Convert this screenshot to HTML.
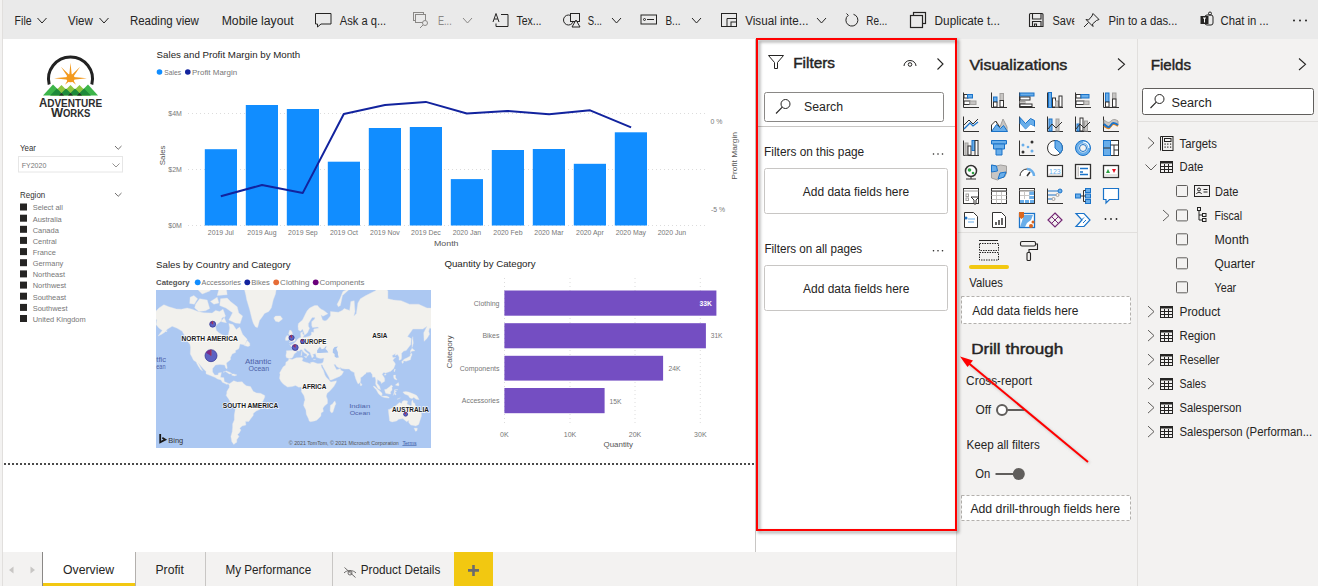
<!DOCTYPE html>
<html><head><meta charset="utf-8"><style>
html,body{margin:0;padding:0;width:1318px;height:586px;overflow:hidden;background:#f3f2f1}
svg{display:block}
text{font-family:"Liberation Sans",sans-serif}
</style></head><body>
<svg width="1318" height="586" viewBox="0 0 1318 586">
<rect x="0" y="0" width="1318" height="586" fill="#f3f2f1"/>
<rect x="0" y="0" width="1318" height="39" fill="#eaeaea"/>
<rect x="3" y="39" width="752" height="513" fill="#ffffff"/>
<rect x="0" y="0" width="2" height="586" fill="#f3f2f1"/>
<rect x="2" y="0" width="1" height="586" fill="#e1dfdd"/>
<rect x="3" y="39" width="0" height="0" fill="#fff"/>
<rect x="3" y="552" width="954" height="34" fill="#f3f2f1"/>
<rect x="43" y="552" width="92" height="34" fill="#ffffff"/>
<rect x="43" y="583" width="92" height="3" fill="#f2c811"/>
<rect x="42" y="552" width="1" height="34" fill="#8a8886"/>
<rect x="135" y="552" width="1" height="34" fill="#b3b0ad"/>
<rect x="205" y="552" width="1" height="34" fill="#c8c6c4"/>
<rect x="332" y="552" width="1" height="34" fill="#c8c6c4"/>
<rect x="454" y="552" width="39" height="34" fill="#f2c811"/>
<rect x="756" y="39" width="201" height="513" fill="#ffffff"/>
<rect x="755" y="39" width="1" height="513" fill="#c8c6c4"/>
<rect x="956" y="39" width="1" height="547" fill="#e1dfdd"/>
<rect x="1137" y="39" width="1" height="547" fill="#e1dfdd"/>
<text x="14.6" y="25.0" font-size="12.5" fill="#252423" font-weight="normal" textLength="17.0" lengthAdjust="spacingAndGlyphs">File</text>
<text x="68.0" y="25.0" font-size="12.5" fill="#252423" font-weight="normal" textLength="24.8" lengthAdjust="spacingAndGlyphs">View</text>
<text x="129.9" y="25.0" font-size="12.5" fill="#252423" font-weight="normal" textLength="69.0" lengthAdjust="spacingAndGlyphs">Reading view</text>
<text x="221.7" y="25.0" font-size="12.5" fill="#252423" font-weight="normal" textLength="72.0" lengthAdjust="spacingAndGlyphs">Mobile layout</text>
<text x="339.8" y="25.0" font-size="12.5" fill="#252423" font-weight="normal" textLength="46.4" lengthAdjust="spacingAndGlyphs">Ask a q...</text>
<text x="516.4" y="25.0" font-size="12.5" fill="#252423" font-weight="normal" textLength="25.1" lengthAdjust="spacingAndGlyphs">Tex...</text>
<text x="587.7" y="25.0" font-size="12.5" fill="#252423" font-weight="normal" textLength="14.3" lengthAdjust="spacingAndGlyphs">S...</text>
<text x="665.5" y="25.0" font-size="12.5" fill="#252423" font-weight="normal" textLength="14.9" lengthAdjust="spacingAndGlyphs">B...</text>
<text x="745.2" y="25.0" font-size="12.5" fill="#252423" font-weight="normal" textLength="63.3" lengthAdjust="spacingAndGlyphs">Visual inte...</text>
<text x="866.2" y="25.0" font-size="12.5" fill="#252423" font-weight="normal" textLength="21.1" lengthAdjust="spacingAndGlyphs">Re...</text>
<text x="934.6" y="25.0" font-size="12.5" fill="#252423" font-weight="normal" textLength="65.4" lengthAdjust="spacingAndGlyphs">Duplicate t...</text>
<text x="1052.5" y="25.0" font-size="12.5" fill="#252423" font-weight="normal" textLength="25.0" lengthAdjust="spacingAndGlyphs">Save</text>
<text x="1108.5" y="25.0" font-size="12.5" fill="#252423" font-weight="normal" textLength="69.0" lengthAdjust="spacingAndGlyphs">Pin to a das...</text>
<text x="1220.5" y="25.0" font-size="12.5" fill="#252423" font-weight="normal" textLength="48.2" lengthAdjust="spacingAndGlyphs">Chat in ...</text>
<text x="438.0" y="25.0" font-size="12.5" fill="#8a8886" font-weight="normal" textLength="13.7" lengthAdjust="spacingAndGlyphs">E...</text>
<rect x="1074.3" y="10" width="8" height="20" fill="#eaeaea"/>
<circle cx="1294" cy="20.5" r="1" fill="#252423"/>
<circle cx="1300" cy="20.5" r="1" fill="#252423"/>
<circle cx="1306" cy="20.5" r="1" fill="#252423"/>
<path d="M37.5 18.0L42.0 23.0L46.5 18.0" fill="none" stroke="#252423" stroke-width="1"/>
<path d="M99.5 18.0L104.0 23.0L108.5 18.0" fill="none" stroke="#252423" stroke-width="1"/>
<path d="M612.0 18.0L616.5 23.0L621.0 18.0" fill="none" stroke="#252423" stroke-width="1"/>
<path d="M692.0 18.0L696.5 23.0L701.0 18.0" fill="none" stroke="#252423" stroke-width="1"/>
<path d="M817.0 18.0L821.5 23.0L826.0 18.0" fill="none" stroke="#252423" stroke-width="1"/>
<path d="M463.0 18.0L467.5 23.0L472.0 18.0" fill="none" stroke="#8a8886" stroke-width="1"/>
<path d="M315.5 13.5h15.5v10.5h-10l-3.5 3v-3h-2z" fill="none" stroke="#252423" stroke-width="1"/>
<g fill="none" stroke="#8a8886" stroke-width="1"><rect x="413.5" y="12.5" width="10" height="8"/><rect x="415.5" y="14.5" width="10" height="8" fill="#eaeaea"/><circle cx="425" cy="23" r="2.5" fill="#eaeaea"/><path d="M423 25l-3 3"/></g>
<g fill="none" stroke="#252423" stroke-width="1"><path d="M493 22l3-8.5l3 8.5M494.2 19h3.6"/><path d="M501 14.5h7v12h-12v-3"/></g>
<g fill="none" stroke="#252423" stroke-width="1"><circle cx="568.5" cy="20" r="5"/><rect x="570.5" y="13.5" width="9" height="8" fill="#eaeaea"/><path d="M572 27l4-7l4 7z" fill="#eaeaea"/></g>
<g fill="none" stroke="#252423" stroke-width="1"><rect x="641" y="15" width="15.5" height="9"/><circle cx="644.5" cy="19.5" r="1"/><path d="M647 19.5h7"/></g>
<g fill="none" stroke="#252423" stroke-width="1"><rect x="721.5" y="13.5" width="15" height="13"/><path d="M727 26.5v-8h9.5"/><rect x="731" y="22" width="5.5" height="4.5"/></g>
<path d="M848 15.5a6 6 0 1 0 5.5-1.2" fill="none" stroke="#252423" stroke-width="1"/><path d="M846.5 13.5l2 2" stroke="#252423"/>
<g fill="none" stroke="#252423" stroke-width="1.2"><rect x="913.5" y="12.5" width="12" height="11"/><rect x="910.5" y="15.5" width="12" height="12" fill="#eaeaea"/></g>
<g fill="none" stroke="#252423" stroke-width="1.1"><path d="M1030.5 13.5h11.5a1 1 0 0 1 1 1v12h-13.5v-12a1 1 0 0 1 1-1z"/><path d="M1032.5 13.5v5.5h8.5v-5.5M1032.5 26.5v-5h8.5v5M1034.5 26.5v-2.5h2v2.5"/></g>
<g fill="none" stroke="#252423" stroke-width="1"><path d="M1093 13.5l6 6l-2.5 1l-4 3.5l0.5 2.5l-7-7l2.5 0.5l3.5-4z"/><path d="M1088.5 22.5l-4.5 4.5"/></g>
<g><rect x="1205" y="15" width="8" height="10" rx="2" fill="none" stroke="#252423"/><rect x="1200.5" y="16" width="8" height="8" fill="#252423"/><path d="M1203 18h3M1204.5 18v4.5" stroke="#fff" stroke-width="1"/><circle cx="1210" cy="13.5" r="1.5" fill="none" stroke="#252423"/></g>
<path d="M49.2 84.5A22 22 0 1 1 91.8 84.5" fill="none" stroke="#222222" stroke-width="3"/>
<path d="M72.1 78.3L70.5 62.8L68.9 78.3ZM71.7 77.3L60.9 66.8L69.3 79.3ZM71.7 79.3L80.1 66.8L69.3 77.3ZM70.5 76.7L54.0 78.3L70.5 79.9ZM70.5 79.9L87.0 78.3L70.5 76.7ZM69.3 77.3L65.0 84.8L71.7 79.3ZM69.3 79.3L76.0 84.8L71.7 77.3Z" fill="#f39a1e"/>
<circle cx="70.5" cy="78.3" r="4" fill="#f39a1e"/>
<path d="M43 95.5L53 84.5L64 95.5Z" fill="#3db54a"/><path d="M77 95.5L88 84.5L98 95.5Z" fill="#3db54a"/>
<path d="M51 95.5L61.5 85L72 95.5ZM60 95.5L70.5 85L81 95.5ZM69 95.5L79.5 85L90 95.5Z" fill="#8dc63f"/>
<path d="M50 95.5L57 88.5L64 95.5ZM59 95.5L66 88.5L73 95.5ZM68 95.5L75 88.5L82 95.5ZM77 95.5L84 88.5L91 95.5Z" fill="#1f8a3a"/>
<path d="M59 95.5L61.5 93L64 95.5ZM68 95.5L70.5 93L73 95.5ZM77 95.5L79.5 93L82 95.5Z" fill="#2a2a2a"/>
<text x="38.9" y="107.0" font-size="13" fill="#2d2d2d" font-weight="bold" textLength="8.3" lengthAdjust="spacingAndGlyphs">A</text>
<text x="47.2" y="107.0" font-size="10.8" fill="#2d2d2d" font-weight="bold" textLength="54.9" lengthAdjust="spacingAndGlyphs">DVENTURE</text>
<text x="50.9" y="117.4" font-size="13" fill="#2d2d2d" font-weight="bold" textLength="12.1" lengthAdjust="spacingAndGlyphs">W</text>
<text x="63.0" y="117.4" font-size="10.8" fill="#2d2d2d" font-weight="bold" textLength="27.4" lengthAdjust="spacingAndGlyphs">ORKS</text>
<text x="20.1" y="151.2" font-size="8.2" fill="#333333" font-weight="normal" textLength="15.9" lengthAdjust="spacingAndGlyphs">Year</text>
<path d="M115.0 146.0L118.2 149.3L121.5 146.0" fill="none" stroke="#605e5c" stroke-width="0.9"/>
<rect x="18.5" y="156.5" width="104" height="15.5" fill="#fff" stroke="#e6e6e6"/>
<text x="21.7" y="167.9" font-size="8" fill="#777777" font-weight="normal" textLength="24.7" lengthAdjust="spacingAndGlyphs">FY2020</text>
<path d="M112.5 163.5L116.0 167.0L119.5 163.5" fill="none" stroke="#8a8886" stroke-width="0.9"/>
<text x="20.1" y="198.4" font-size="8.2" fill="#333333" font-weight="normal" textLength="25.1" lengthAdjust="spacingAndGlyphs">Region</text>
<path d="M115.0 193.0L118.2 196.3L121.5 193.0" fill="none" stroke="#605e5c" stroke-width="0.9"/>
<rect x="20" y="203.5" width="7" height="7" fill="#252423"/>
<text x="32.7" y="210.3" font-size="7.8" fill="#777777" font-weight="normal" textLength="30.2" lengthAdjust="spacingAndGlyphs">Select all</text>
<rect x="20" y="214.7" width="7" height="7" fill="#252423"/>
<text x="32.7" y="221.5" font-size="7.8" fill="#777777" font-weight="normal" textLength="29.0" lengthAdjust="spacingAndGlyphs">Australia</text>
<rect x="20" y="225.8" width="7" height="7" fill="#252423"/>
<text x="32.7" y="232.6" font-size="7.8" fill="#777777" font-weight="normal" textLength="26.1" lengthAdjust="spacingAndGlyphs">Canada</text>
<rect x="20" y="236.9" width="7" height="7" fill="#252423"/>
<text x="32.7" y="243.8" font-size="7.8" fill="#777777" font-weight="normal" textLength="24.0" lengthAdjust="spacingAndGlyphs">Central</text>
<rect x="20" y="248.1" width="7" height="7" fill="#252423"/>
<text x="32.7" y="254.9" font-size="7.8" fill="#777777" font-weight="normal" textLength="23.2" lengthAdjust="spacingAndGlyphs">France</text>
<rect x="20" y="259.2" width="7" height="7" fill="#252423"/>
<text x="32.7" y="266.1" font-size="7.8" fill="#777777" font-weight="normal" textLength="30.6" lengthAdjust="spacingAndGlyphs">Germany</text>
<rect x="20" y="270.4" width="7" height="7" fill="#252423"/>
<text x="32.7" y="277.2" font-size="7.8" fill="#777777" font-weight="normal" textLength="32.3" lengthAdjust="spacingAndGlyphs">Northeast</text>
<rect x="20" y="281.6" width="7" height="7" fill="#252423"/>
<text x="32.7" y="288.4" font-size="7.8" fill="#777777" font-weight="normal" textLength="33.5" lengthAdjust="spacingAndGlyphs">Northwest</text>
<rect x="20" y="292.7" width="7" height="7" fill="#252423"/>
<text x="32.7" y="299.5" font-size="7.8" fill="#777777" font-weight="normal" textLength="33.5" lengthAdjust="spacingAndGlyphs">Southeast</text>
<rect x="20" y="303.9" width="7" height="7" fill="#252423"/>
<text x="32.7" y="310.7" font-size="7.8" fill="#777777" font-weight="normal" textLength="34.8" lengthAdjust="spacingAndGlyphs">Southwest</text>
<rect x="20" y="315.0" width="7" height="7" fill="#252423"/>
<text x="32.7" y="321.8" font-size="7.8" fill="#777777" font-weight="normal" textLength="53.0" lengthAdjust="spacingAndGlyphs">United Kingdom</text>
<text x="156.6" y="58.0" font-size="9.8" fill="#252423" font-weight="normal" textLength="143.6" lengthAdjust="spacingAndGlyphs">Sales and Profit Margin by Month</text>
<circle cx="159.5" cy="72" r="2.8" fill="#118dff"/><circle cx="187.8" cy="72" r="2.8" fill="#12239e"/>
<text x="164.3" y="75.0" font-size="7.8" fill="#777777" font-weight="normal" textLength="16.8" lengthAdjust="spacingAndGlyphs">Sales</text>
<text x="192.0" y="75.0" font-size="7.8" fill="#777777" font-weight="normal" textLength="45.1" lengthAdjust="spacingAndGlyphs">Profit Margin</text>
<line x1="188" y1="113.5" x2="705" y2="113.5" stroke="#dcdcdc" stroke-width="1" stroke-dasharray="1 3"/>
<line x1="188" y1="169.5" x2="705" y2="169.5" stroke="#dcdcdc" stroke-width="1" stroke-dasharray="1 3"/>
<line x1="188" y1="225.5" x2="705" y2="225.5" stroke="#dcdcdc" stroke-width="1" stroke-dasharray="1 3"/>
<text x="168.3" y="116.3" font-size="7.5" fill="#777777" font-weight="normal" textLength="13.6" lengthAdjust="spacingAndGlyphs">$4M</text>
<text x="168.3" y="172.4" font-size="7.5" fill="#777777" font-weight="normal" textLength="13.6" lengthAdjust="spacingAndGlyphs">$2M</text>
<text x="168.3" y="228.3" font-size="7.5" fill="#777777" font-weight="normal" textLength="13.6" lengthAdjust="spacingAndGlyphs">$0M</text>
<text x="0" y="0" font-size="8" fill="#555" transform="translate(164.5 165.2) rotate(-90)" textLength="19.7" lengthAdjust="spacingAndGlyphs">Sales</text>
<rect x="204.8" y="149.2" width="32.2" height="76.3" fill="#118dff"/>
<rect x="245.8" y="105" width="32.2" height="120.5" fill="#118dff"/>
<rect x="286.8" y="109" width="32.2" height="116.5" fill="#118dff"/>
<rect x="327.8" y="161.7" width="32.2" height="63.8" fill="#118dff"/>
<rect x="368.8" y="128" width="32.2" height="97.5" fill="#118dff"/>
<rect x="409.8" y="127" width="32.2" height="98.5" fill="#118dff"/>
<rect x="450.8" y="179.1" width="32.2" height="46.4" fill="#118dff"/>
<rect x="491.8" y="150" width="32.2" height="75.5" fill="#118dff"/>
<rect x="532.8" y="149" width="32.2" height="76.5" fill="#118dff"/>
<rect x="573.8" y="163.8" width="32.2" height="61.7" fill="#118dff"/>
<rect x="614.8" y="132.3" width="32.2" height="93.2" fill="#118dff"/>
<polyline points="220.8,196.3 262,185 302.8,192.9 343.8,114 385,105 425.8,101.9 466.8,113.5 507.2,110.9 549.1,114.3 590.1,110.3 631.1,127.3" fill="none" stroke="#12239e" stroke-width="2" stroke-linejoin="round"/>
<text x="207.8" y="235.2" font-size="7.2" fill="#777777" font-weight="normal" textLength="26.1" lengthAdjust="spacingAndGlyphs">2019 Jul</text>
<text x="247.3" y="235.2" font-size="7.2" fill="#777777" font-weight="normal" textLength="29.2" lengthAdjust="spacingAndGlyphs">2019 Aug</text>
<text x="288.1" y="235.2" font-size="7.2" fill="#777777" font-weight="normal" textLength="29.6" lengthAdjust="spacingAndGlyphs">2019 Sep</text>
<text x="329.9" y="235.2" font-size="7.2" fill="#777777" font-weight="normal" textLength="28.0" lengthAdjust="spacingAndGlyphs">2019 Oct</text>
<text x="370.1" y="235.2" font-size="7.2" fill="#777777" font-weight="normal" textLength="29.6" lengthAdjust="spacingAndGlyphs">2019 Nov</text>
<text x="411.1" y="235.2" font-size="7.2" fill="#777777" font-weight="normal" textLength="29.6" lengthAdjust="spacingAndGlyphs">2019 Dec</text>
<text x="452.7" y="235.2" font-size="7.2" fill="#777777" font-weight="normal" textLength="28.4" lengthAdjust="spacingAndGlyphs">2020 Jan</text>
<text x="493.3" y="235.2" font-size="7.2" fill="#777777" font-weight="normal" textLength="29.2" lengthAdjust="spacingAndGlyphs">2020 Feb</text>
<text x="534.3" y="235.2" font-size="7.2" fill="#777777" font-weight="normal" textLength="29.2" lengthAdjust="spacingAndGlyphs">2020 Mar</text>
<text x="576.1" y="235.2" font-size="7.2" fill="#777777" font-weight="normal" textLength="27.6" lengthAdjust="spacingAndGlyphs">2020 Apr</text>
<text x="615.7" y="235.2" font-size="7.2" fill="#777777" font-weight="normal" textLength="30.3" lengthAdjust="spacingAndGlyphs">2020 May</text>
<text x="657.7" y="235.2" font-size="7.2" fill="#777777" font-weight="normal" textLength="28.4" lengthAdjust="spacingAndGlyphs">2020 Jun</text>
<text x="434.0" y="245.5" font-size="8" fill="#555555" font-weight="normal" textLength="24.5" lengthAdjust="spacingAndGlyphs">Month</text>
<text x="710.5" y="123.5" font-size="7.2" fill="#777777" font-weight="normal" textLength="11.9" lengthAdjust="spacingAndGlyphs">0 %</text>
<text x="711.0" y="211.6" font-size="7.2" fill="#777777" font-weight="normal" textLength="14.0" lengthAdjust="spacingAndGlyphs">-5 %</text>
<text x="0" y="0" font-size="8" fill="#555" transform="translate(736.6 179.7) rotate(-90)" textLength="47.7" lengthAdjust="spacingAndGlyphs">Profit Margin</text>
<text x="156.1" y="268.0" font-size="9.8" fill="#252423" font-weight="normal" textLength="134.4" lengthAdjust="spacingAndGlyphs">Sales by Country and Category</text>
<text x="156.1" y="285.0" font-size="7.8" fill="#555555" font-weight="bold" textLength="33.5" lengthAdjust="spacingAndGlyphs">Category</text>
<circle cx="197.7" cy="282.3" r="2.9" fill="#118dff"/>
<text x="201.6" y="285.0" font-size="7.8" fill="#777777" font-weight="normal" textLength="39.3" lengthAdjust="spacingAndGlyphs">Accessories</text>
<circle cx="247.3" cy="282.3" r="2.9" fill="#12239e"/>
<text x="251.2" y="285.0" font-size="7.8" fill="#777777" font-weight="normal" textLength="18.6" lengthAdjust="spacingAndGlyphs">Bikes</text>
<circle cx="276.2" cy="282.3" r="2.9" fill="#e66c37"/>
<text x="280.1" y="285.0" font-size="7.8" fill="#777777" font-weight="normal" textLength="29.4" lengthAdjust="spacingAndGlyphs">Clothing</text>
<circle cx="315.7" cy="282.3" r="2.9" fill="#6b007b"/>
<text x="319.6" y="285.0" font-size="7.8" fill="#777777" font-weight="normal" textLength="44.9" lengthAdjust="spacingAndGlyphs">Components</text>
<svg x="156" y="290" width="275" height="158" viewBox="156 290 275 158" overflow="hidden"><rect x="156" y="290" width="275" height="158" fill="#acc8f2"/><path d="M153.9 317.9L155.6 311.5L158.9 308.0L163.9 304.7L168.9 306.8L176.4 309.0L181.4 309.2L187.2 308.0L192.2 309.2L198.0 311.5L203.9 312.7L212.2 313.1L215.5 310.4L219.7 311.5L223.0 309.2L225.5 315.9L221.4 320.9L218.0 323.6L215.5 326.3L216.4 330.4L218.9 332.8L223.0 335.3L225.5 335.7L227.2 340.6L228.0 336.5L229.7 328.0L228.8 323.6L233.0 324.5L236.3 329.6L239.7 327.1L242.6 334.3L247.2 339.3L244.7 345.1L240.1 343.9L238.8 348.7L235.5 350.5L235.5 352.5L232.2 353.9L230.5 357.6L230.5 359.7L226.4 363.1L227.2 367.4L226.9 369.1L225.7 367.9L224.7 365.1L219.7 364.4L215.5 365.1L212.6 368.4L212.6 372.0L214.7 375.1L218.0 374.9L218.5 372.9L221.4 372.5L220.5 377.3L223.9 377.7L224.3 381.6L227.6 382.9L229.4 383.7L230.5 382.9L233.8 380.7L237.2 382.0L242.2 381.8L243.8 383.7L246.3 385.8L250.5 386.6L252.2 389.6L253.4 391.6L256.7 392.9L260.5 393.3L264.7 395.4L264.8 397.1L263.0 400.9L261.3 403.4L260.9 406.5L259.7 409.6L256.7 410.7L253.4 413.2L253.2 415.6L250.5 419.0L248.8 421.4L245.5 421.4L245.9 425.1L242.2 426.1L239.7 428.3L240.9 430.0L239.3 432.9L237.6 434.6L239.0 436.5L236.8 439.7L236.8 442.3L235.5 443.0L233.8 444.4L231.8 441.7L230.9 436.5L232.2 431.7L232.6 427.2L232.6 424.0L234.3 419.9L234.3 415.1L235.1 410.5L235.3 406.5L233.8 405.2L230.5 402.6L228.8 399.2L226.2 395.4L226.8 393.3L226.8 391.6L228.0 389.6L229.3 387.5L229.3 385.4L228.0 383.4L227.2 384.5L222.4 382.3L220.9 379.9L217.6 379.0L214.7 377.3L206.0 373.8L206.0 371.4L203.0 368.4L200.1 365.1L198.3 362.9L199.7 365.5L201.0 367.9L202.6 370.9L200.5 369.5L198.5 366.5L196.8 363.6L196.2 362.0L193.5 360.2L191.8 356.8L190.3 354.0L190.5 347.6L190.0 344.6L188.0 341.9L185.1 336.5L182.2 331.2L177.2 328.3L172.2 326.3L167.2 329.3L165.1 332.0L161.8 334.3L158.1 336.0L162.2 330.4L158.9 328.0L156.0 324.5L156.8 319.9ZM243.8 283.3L244.3 289.0L245.9 295.6L246.7 299.8L249.7 309.7L250.9 314.8L252.1 319.5L253.4 323.6L255.5 327.1L257.6 327.6L259.5 320.5L262.2 316.9L264.5 313.5L268.8 311.5L271.4 307.8L273.3 299.8L275.5 294.1L276.3 289.0L277.1 283.3ZM273.8 317.9L275.5 316.1L280.5 315.9L282.6 318.9L278.8 322.0L275.5 321.2ZM289.1 358.6L286.3 357.6L285.9 355.5L286.5 352.2L286.3 350.8L290.5 350.5L292.6 350.6L292.8 347.6L290.1 345.4L292.6 344.2L295.0 342.6L296.3 341.0L297.5 339.3L299.2 337.9L300.9 337.2L300.7 335.0L300.6 332.8L302.5 331.7L302.5 334.0L304.2 335.0L303.0 337.2L305.5 337.2L309.2 336.2L311.3 335.0L311.5 332.0L313.8 332.3L313.8 329.0L318.8 328.0L317.5 327.1L312.5 327.6L311.7 325.4L311.7 321.8L314.6 318.9L315.0 317.5L312.1 317.5L308.4 323.6L308.4 326.3L309.5 328.3L307.5 332.8L305.9 334.3L304.6 335.1L303.4 331.2L302.5 329.1L300.5 331.2L298.4 329.9L298.0 326.3L298.4 323.6L302.5 319.9L305.5 313.8L307.1 310.8L309.6 308.0L314.6 305.5L317.5 305.5L319.6 308.0L321.3 309.2L323.8 310.4L327.9 313.8L322.9 316.3L320.9 314.8L322.5 319.9L325.0 320.9L327.1 319.9L330.4 315.9L330.4 311.5L338.3 312.2L342.1 310.6L344.2 308.5L349.6 310.4L350.8 301.5L354.2 300.7L355.0 311.5L353.8 315.9L356.3 313.8L357.9 302.9L360.4 298.7L365.8 295.6L375.4 290.7L380.4 284.5L387.9 290.7L387.9 298.7L393.7 300.1L401.2 300.7L409.5 304.2L418.7 304.2L427.0 308.0L435.4 308.2L443.7 310.8L443.7 318.9L442.0 319.9L438.7 324.9L435.4 328.0L429.5 328.3L428.7 331.2L429.5 334.3L427.0 338.6L424.1 341.3L423.7 332.8L427.0 326.3L422.9 329.1L412.9 329.1L407.5 336.5L411.2 338.6L410.8 344.5L406.2 350.5L403.7 351.1L401.6 353.3L401.6 357.6L401.2 359.4L399.0 360.2L399.1 357.1L397.6 354.6L395.0 355.5L395.4 353.5L393.3 354.9L392.1 355.5L392.9 357.4L395.8 357.4L394.1 358.6L392.9 360.2L394.6 362.6L395.4 364.1L393.7 368.4L390.8 371.3L385.8 372.9L383.7 372.5L382.1 374.2L384.6 378.2L384.7 381.2L381.2 383.5L381.1 382.1L377.5 379.5L377.1 383.3L379.6 386.2L380.6 389.7L377.9 388.5L375.6 384.1L375.8 379.9L375.0 376.9L372.5 377.3L372.1 374.2L370.4 372.0L368.7 372.2L366.2 372.5L365.8 373.8L364.6 374.5L362.5 376.4L360.6 377.7L360.7 379.9L360.2 382.2L358.3 384.1L357.5 382.9L355.8 379.0L354.6 375.1L354.3 372.5L352.1 371.6L350.8 370.7L349.2 369.0L345.0 369.1L341.7 368.6L340.8 367.4L339.2 367.9L336.7 366.6L335.4 364.4L333.8 364.6L335.6 367.9L336.7 369.7L340.4 368.4L340.8 370.2L343.6 371.6L341.9 374.7L339.6 376.4L337.1 377.5L331.3 380.1L329.9 380.1L329.2 377.7L326.3 372.5L322.9 366.5L322.5 365.1L320.9 364.7L321.7 367.4L323.4 370.2L324.9 374.9L326.3 377.3L329.2 380.3L329.9 381.2L330.9 382.1L336.4 380.8L336.1 382.6L333.8 386.6L329.6 391.2L327.1 393.3L326.3 396.2L327.5 399.6L327.5 403.4L324.4 406.0L322.9 408.2L323.4 411.4L321.1 413.0L320.9 416.1L318.8 418.3L316.7 420.2L314.6 420.9L310.5 421.7L309.1 420.9L308.6 419.0L306.3 414.2L305.9 410.0L303.6 405.6L304.2 401.7L305.0 400.0L304.0 395.8L301.3 391.6L301.7 387.9L300.9 387.0L298.8 387.2L295.5 385.5L292.1 386.6L287.6 387.1L284.6 385.1L282.7 383.4L280.9 381.2L279.5 378.4L280.1 374.2L279.6 372.9L283.0 367.0L285.6 365.1L285.9 362.2L288.1 360.7L289.0 358.8L292.1 359.6L296.3 357.8L302.1 357.4L303.0 358.8L302.1 360.5L303.1 361.5L306.7 362.4L310.5 363.7L310.5 362.6L313.0 362.1L317.9 363.7L320.4 363.4L322.5 363.1L323.4 361.2L323.8 358.8L323.8 357.9L320.9 358.5L318.4 358.1L316.4 357.3L315.9 354.9L315.6 354.3L315.5 353.5L313.4 354.2L312.6 354.0L313.8 356.3L312.1 358.1L311.7 357.1L310.9 354.9L310.0 352.4L307.1 350.5L305.1 348.6L304.0 348.4L304.2 349.9L305.5 351.6L307.1 352.8L309.2 354.2L307.5 356.0L306.9 356.5L307.0 354.4L304.6 353.0L303.0 351.6L302.1 349.9L300.9 349.6L299.2 351.0L296.5 350.8L296.5 352.3L294.2 353.9L293.4 356.0L292.1 357.9ZM388.3 409.6L388.7 413.2L389.6 420.9L392.1 421.9L396.6 420.9L398.7 419.2L402.9 418.5L406.6 421.7L408.7 420.4L408.7 422.5L410.8 425.1L413.7 425.4L415.8 426.1L418.7 424.5L420.0 420.4L421.6 415.6L421.2 412.3L419.4 410.0L417.9 408.2L415.4 406.0L414.8 403.4L413.3 402.6L412.5 399.8L411.6 401.7L411.6 405.2L410.4 405.8L407.0 403.9L407.6 401.1L404.1 400.4L402.5 401.3L401.6 403.4L399.1 402.6L397.9 403.9L395.4 406.0L392.9 407.8L389.1 409.4ZM414.1 428.1L417.3 428.2L417.0 430.8L415.4 431.2ZM373.2 386.1L375.0 386.5L377.5 389.0L380.4 391.6L382.1 393.3L382.1 395.6L380.8 395.7L378.7 394.1L377.5 392.0L376.1 389.4L374.2 387.7ZM381.4 396.5L384.1 396.1L386.2 396.1L387.6 396.6L389.1 397.3L389.1 398.1L386.2 397.7L383.7 397.3L381.6 396.6ZM384.6 389.6L385.0 391.6L385.6 393.3L389.1 394.1L390.8 394.0L390.4 392.0L392.1 390.0L391.9 387.3L392.9 386.4L391.2 385.0L390.0 386.5L387.9 388.1L386.2 389.3ZM393.3 395.4L394.1 392.9L394.6 389.8L397.9 389.6L394.1 390.4L396.6 391.6L395.0 392.3L396.2 394.6L395.0 394.9L394.1 393.1ZM402.9 392.0L405.8 391.6L408.7 392.1L411.2 393.0L415.0 394.6L417.0 395.8L419.1 399.6L416.2 399.2L413.7 397.3L412.9 398.3L411.2 398.4L409.5 397.6L408.3 395.4L404.5 394.1L403.7 393.1ZM393.7 375.1L395.6 375.1L395.4 377.3L397.1 379.9L394.6 379.2L394.1 378.6L393.6 377.0ZM395.4 385.0L398.3 382.6L399.1 385.0L398.3 386.0L397.1 385.5ZM393.9 371.1L394.6 369.0L395.4 369.3L394.4 372.0ZM384.2 374.5L385.8 373.7L386.2 374.2L385.0 375.4ZM402.8 360.7L406.2 361.2L410.4 359.7L411.2 356.5L412.0 354.9L411.5 352.9L410.4 353.9L410.2 356.0L407.7 357.4L404.5 359.1L402.8 360.4ZM401.7 361.5L402.9 360.8L403.7 361.9L402.6 363.6L401.9 362.2ZM410.4 352.8L411.6 351.3L415.0 350.7L412.0 348.2L410.4 350.8ZM412.0 347.6L413.3 343.2L412.7 336.7L412.0 340.6ZM360.2 385.6L360.4 382.6L361.9 384.5L361.7 385.5ZM334.9 400.9L335.9 403.9L335.0 405.6L332.9 412.3L331.3 412.8L330.1 410.9L330.4 405.2L332.5 404.1L333.8 402.1ZM289.1 342.5L295.0 341.0L295.2 339.0L293.8 337.9L292.6 335.0L292.1 332.0L290.9 330.3L289.6 330.3L288.6 333.5L289.6 335.7L291.3 336.5L290.1 338.1L290.1 339.7L289.5 340.3L291.3 340.7ZM288.8 339.7L288.8 337.2L288.0 335.4L286.7 335.7L285.5 337.9L285.5 340.3L287.1 340.5ZM242.6 315.9L240.1 323.6L235.5 323.1L228.8 319.9L232.6 312.7L225.9 308.0L219.7 305.5L220.5 298.7L227.2 298.1L230.5 301.5L237.2 306.8L238.8 313.1ZM195.5 304.2L199.7 298.7L207.2 300.1L209.7 308.5L205.5 310.8L198.9 311.5L194.7 308.0ZM189.7 303.4L194.3 304.2L197.6 298.7L193.9 295.6L190.1 297.2ZM210.5 301.5L217.2 297.2L218.9 302.9L213.9 304.2ZM217.2 295.6L227.2 294.7L226.4 289.0L218.9 289.0ZM202.2 294.1L210.5 290.7L206.4 287.2L197.2 289.0ZM221.4 321.8L226.4 322.7L223.9 316.9L221.8 317.9ZM244.3 345.6L247.2 340.5L249.7 343.2L249.9 345.7L248.0 346.6ZM223.0 372.2L226.4 370.9L229.7 372.2L232.0 373.6L229.3 374.0L225.5 371.6ZM231.8 374.0L233.8 373.9L236.9 375.0L234.7 375.9L231.8 375.3ZM337.1 304.2L340.0 298.7L342.9 291.4L351.3 287.5L342.5 295.6L340.4 305.5L338.3 306.8ZM301.3 353.3L302.0 351.1L301.7 355.5L300.8 355.5ZM304.2 356.4L306.8 356.2L306.3 357.9ZM313.4 359.3L315.7 359.4L313.8 359.7ZM166.4 332.0L167.2 330.7L165.6 331.2ZM289.6 344.5L290.1 345.1ZM400.4 397.9L399.6 398.3L397.1 399.2Z" fill="#f2f1ed" stroke="#e2e6ea" stroke-width="0.4"/>
<path d="M317.1 352.8L317.1 350.5L318.5 348.5L320.0 346.8L321.7 349.3L324.2 348.4L325.4 346.4L326.7 346.4L325.4 348.7L327.1 350.5L328.4 352.6L323.8 352.8L319.9 353.1L317.5 353.0ZM332.9 349.9L332.7 352.8L334.6 353.9L334.6 356.5L336.3 357.8L338.8 357.6L337.9 354.4L337.9 352.2L336.3 348.7L337.9 346.4L334.6 347.0L332.9 349.3Z" fill="#a9c5ef"/></svg>
<text x="181.5" y="340.5" font-size="7.5" fill="#1a1a1a" font-weight="bold" textLength="56.3" lengthAdjust="spacingAndGlyphs" stroke="#ffffff" stroke-width="1.6" stroke-opacity="0.8" paint-order="stroke">NORTH AMERICA</text>
<text x="300.5" y="344.2" font-size="7.5" fill="#1a1a1a" font-weight="bold" textLength="25.8" lengthAdjust="spacingAndGlyphs" stroke="#ffffff" stroke-width="1.6" stroke-opacity="0.8" paint-order="stroke">EUROPE</text>
<text x="372.2" y="338.0" font-size="7.5" fill="#1a1a1a" font-weight="bold" textLength="15.1" lengthAdjust="spacingAndGlyphs" stroke="#ffffff" stroke-width="1.6" stroke-opacity="0.8" paint-order="stroke">ASIA</text>
<text x="302.3" y="389.0" font-size="7.5" fill="#1a1a1a" font-weight="bold" textLength="24.0" lengthAdjust="spacingAndGlyphs" stroke="#ffffff" stroke-width="1.6" stroke-opacity="0.8" paint-order="stroke">AFRICA</text>
<text x="222.8" y="407.6" font-size="7.5" fill="#1a1a1a" font-weight="bold" textLength="55.5" lengthAdjust="spacingAndGlyphs" stroke="#ffffff" stroke-width="1.6" stroke-opacity="0.8" paint-order="stroke">SOUTH AMERICA</text>
<text x="391.9" y="412.3" font-size="7.5" fill="#1a1a1a" font-weight="bold" textLength="37.0" lengthAdjust="spacingAndGlyphs" stroke="#ffffff" stroke-width="1.6" stroke-opacity="0.8" paint-order="stroke">AUSTRALIA</text>
<text x="245.0" y="363.8" font-size="6.8" fill="#4d62a8" font-weight="normal" textLength="26.4" lengthAdjust="spacingAndGlyphs">Atlantic</text>
<text x="248.6" y="370.7" font-size="6.8" fill="#4d62a8" font-weight="normal" textLength="20.4" lengthAdjust="spacingAndGlyphs">Ocean</text>
<text x="349.2" y="408.0" font-size="6.2" fill="#4d62a8" font-weight="normal" textLength="21.0" lengthAdjust="spacingAndGlyphs">Indian</text>
<text x="349.7" y="414.8" font-size="6.2" fill="#4d62a8" font-weight="normal" textLength="20.5" lengthAdjust="spacingAndGlyphs">Ocean</text>
<text x="156.3" y="362.3" font-size="6.5" fill="#4d62a8" font-weight="normal" textLength="9.7" lengthAdjust="spacingAndGlyphs">tfic</text>
<text x="156.3" y="369.2" font-size="6.5" fill="#4d62a8" font-weight="normal" textLength="9.2" lengthAdjust="spacingAndGlyphs">ean</text>
<path d="M160.2 434V442.3L165.3 439.6L162.3 437.8" fill="none" stroke="#1a1a1a" stroke-width="1.8" stroke-linejoin="miter"/>
<text x="168.3" y="442.8" font-size="7.5" fill="#333333" font-weight="normal" textLength="14.9" lengthAdjust="spacingAndGlyphs">Bing</text>
<text x="288.8" y="444.6" font-size="4.6" fill="#555555" font-weight="normal" textLength="110.0" lengthAdjust="spacingAndGlyphs">© 2021 TomTom, © 2021 Microsoft Corporation</text>
<text x="402.4" y="444.6" font-size="4.6" fill="#3b5ba5" font-weight="normal" textLength="14.1" lengthAdjust="spacingAndGlyphs">Terms</text>
<rect x="402.4" y="445.3" width="14.1" height="0.6" fill="#3b5ba5"/>
<circle cx="212.7" cy="324.2" r="3" fill="#5d62c2" stroke="#2b2f8f" stroke-width="0.7"/>
<path d="M212.7 324.2L212.7 321.2A3 3 0 0 0 210.1 322.7Z" fill="#7a2a8a"/>
<path d="M212.7 324.2L212.7 321.2" stroke="#c0392b" stroke-width="0.8"/>
<circle cx="211" cy="355.7" r="6" fill="#5d62c2" stroke="#2b2f8f" stroke-width="0.7"/>
<path d="M211 355.7L211 349.7A6 6 0 0 0 205.9 352.7Z" fill="#7a2a8a"/>
<path d="M211 355.7L211 349.7" stroke="#c0392b" stroke-width="0.8"/>
<circle cx="291.6" cy="337.8" r="2.6" fill="#5d62c2" stroke="#2b2f8f" stroke-width="0.7"/>
<path d="M291.6 337.8L291.6 335.2A2.6 2.6 0 0 0 289.4 336.5Z" fill="#7a2a8a"/>
<path d="M291.6 337.8L291.6 335.2" stroke="#c0392b" stroke-width="0.8"/>
<circle cx="295.2" cy="347.5" r="3" fill="#5d62c2" stroke="#2b2f8f" stroke-width="0.7"/>
<path d="M295.2 347.5L295.2 344.5A3 3 0 0 0 292.6 346.0Z" fill="#7a2a8a"/>
<path d="M295.2 347.5L295.2 344.5" stroke="#c0392b" stroke-width="0.8"/>
<circle cx="302.5" cy="341.4" r="2" fill="#5d62c2" stroke="#2b2f8f" stroke-width="0.7"/>
<path d="M302.5 341.4L302.5 339.4A2 2 0 0 0 300.8 340.4Z" fill="#7a2a8a"/>
<path d="M302.5 341.4L302.5 339.4" stroke="#c0392b" stroke-width="0.8"/>
<circle cx="405.6" cy="414.2" r="2" fill="#5d62c2" stroke="#2b2f8f" stroke-width="0.7"/>
<path d="M405.6 414.2L405.6 412.2A2 2 0 0 0 403.9 413.2Z" fill="#7a2a8a"/>
<path d="M405.6 414.2L405.6 412.2" stroke="#c0392b" stroke-width="0.8"/>
<text x="444.4" y="267.3" font-size="9.8" fill="#252423" font-weight="normal" textLength="91.2" lengthAdjust="spacingAndGlyphs">Quantity by Category</text>
<line x1="504.5" y1="278" x2="504.5" y2="426" stroke="#dcdcdc" stroke-width="1" stroke-dasharray="1 3"/>
<line x1="570" y1="278" x2="570" y2="426" stroke="#dcdcdc" stroke-width="1" stroke-dasharray="1 3"/>
<line x1="635" y1="278" x2="635" y2="426" stroke="#dcdcdc" stroke-width="1" stroke-dasharray="1 3"/>
<line x1="700.3" y1="278" x2="700.3" y2="426" stroke="#dcdcdc" stroke-width="1" stroke-dasharray="1 3"/>
<rect x="504.4" y="290.5" width="212.0" height="25.2" fill="#744ec2"/>
<text x="473.8" y="305.8" font-size="7.2" fill="#777777" font-weight="normal" textLength="25.7" lengthAdjust="spacingAndGlyphs">Clothing</text>
<rect x="504.4" y="323.2" width="201.5" height="25.1" fill="#744ec2"/>
<text x="482.4" y="338.4" font-size="7.2" fill="#777777" font-weight="normal" textLength="17.1" lengthAdjust="spacingAndGlyphs">Bikes</text>
<rect x="504.4" y="355.8" width="158.7" height="24.8" fill="#744ec2"/>
<text x="459.8" y="370.9" font-size="7.2" fill="#777777" font-weight="normal" textLength="39.7" lengthAdjust="spacingAndGlyphs">Components</text>
<rect x="504.4" y="388" width="100.2" height="25.2" fill="#744ec2"/>
<text x="461.8" y="403.3" font-size="7.2" fill="#777777" font-weight="normal" textLength="37.7" lengthAdjust="spacingAndGlyphs">Accessories</text>
<text x="699.5" y="305.9" font-size="7" fill="#ffffff" font-weight="bold" textLength="12.4" lengthAdjust="spacingAndGlyphs">33K</text>
<text x="710.8" y="338.3" font-size="7" fill="#777777" font-weight="normal" textLength="11.7" lengthAdjust="spacingAndGlyphs">31K</text>
<text x="668.4" y="370.8" font-size="7" fill="#777777" font-weight="normal" textLength="12.1" lengthAdjust="spacingAndGlyphs">24K</text>
<text x="609.5" y="403.5" font-size="7" fill="#777777" font-weight="normal" textLength="12.0" lengthAdjust="spacingAndGlyphs">15K</text>
<text x="500.1" y="436.5" font-size="7.2" fill="#777777" font-weight="normal" textLength="8.6" lengthAdjust="spacingAndGlyphs">0K</text>
<text x="563.8" y="436.5" font-size="7.2" fill="#777777" font-weight="normal" textLength="12.5" lengthAdjust="spacingAndGlyphs">10K</text>
<text x="628.8" y="436.5" font-size="7.2" fill="#777777" font-weight="normal" textLength="12.5" lengthAdjust="spacingAndGlyphs">20K</text>
<text x="694.1" y="436.5" font-size="7.2" fill="#777777" font-weight="normal" textLength="12.5" lengthAdjust="spacingAndGlyphs">30K</text>
<text x="603.5" y="447.3" font-size="8" fill="#555555" font-weight="normal" textLength="29.5" lengthAdjust="spacingAndGlyphs">Quantity</text>
<text x="0" y="0" font-size="8" fill="#555" transform="translate(452.2 368.5) rotate(-90)" textLength="33" lengthAdjust="spacingAndGlyphs">Category</text>
<line x1="4" y1="464" x2="755" y2="464" stroke="#4a4a4a" stroke-width="2" stroke-dasharray="2 2"/>
<path d="M768.5 55.5H783.5L777.5 62.5V68.5H774.5V62.5Z" fill="none" stroke="#252423" stroke-width="1"/>
<text x="793.2" y="68.0" font-size="15" fill="#252423" font-weight="normal" textLength="41.8" lengthAdjust="spacingAndGlyphs" stroke="#252423" stroke-width="0.45">Filters</text>
<path d="M904 66a6 5.5 0 0 1 12 0" fill="none" stroke="#252423" stroke-width="1"/><circle cx="910" cy="64.5" r="1.8" fill="none" stroke="#252423"/>
<path d="M937.5 58.5L943 64L937.5 69.5" fill="none" stroke="#252423" stroke-width="1.1"/>
<rect x="764.5" y="92.5" width="179" height="29" rx="2" fill="#fff" stroke="#8a8886"/>
<circle cx="785.5" cy="104" r="4.5" fill="none" stroke="#252423"/><path d="M782.3 107.2L776 113.5" stroke="#252423" stroke-width="1.1"/>
<text x="804.0" y="111.0" font-size="12.5" fill="#252423" font-weight="normal" textLength="39.0" lengthAdjust="spacingAndGlyphs">Search</text>
<rect x="757" y="126" width="199" height="1" fill="#c8c6c4"/>
<text x="764.1" y="156.0" font-size="12" fill="#252423" font-weight="normal" textLength="100.1" lengthAdjust="spacingAndGlyphs">Filters on this page</text>
<circle cx="933.5" cy="154" r="0.8" fill="#252423"/>
<circle cx="938" cy="154" r="0.8" fill="#252423"/>
<circle cx="942.5" cy="154" r="0.8" fill="#252423"/>
<rect x="764.5" y="168.5" width="183" height="45" rx="2" fill="#fff" stroke="#c8c6c4"/>
<text x="802.8" y="195.9" font-size="12" fill="#252423" font-weight="normal" textLength="106.3" lengthAdjust="spacingAndGlyphs">Add data fields here</text>
<text x="764.4" y="252.8" font-size="12" fill="#252423" font-weight="normal" textLength="97.8" lengthAdjust="spacingAndGlyphs">Filters on all pages</text>
<circle cx="933.5" cy="250.7" r="0.8" fill="#252423"/>
<circle cx="938" cy="250.7" r="0.8" fill="#252423"/>
<circle cx="942.5" cy="250.7" r="0.8" fill="#252423"/>
<rect x="764.5" y="265.5" width="183" height="45" rx="2" fill="#fff" stroke="#c8c6c4"/>
<text x="803.1" y="293.1" font-size="12" fill="#252423" font-weight="normal" textLength="106.4" lengthAdjust="spacingAndGlyphs">Add data fields here</text>
<text x="969.4" y="69.6" font-size="15" fill="#252423" font-weight="normal" textLength="98.0" lengthAdjust="spacingAndGlyphs" stroke="#252423" stroke-width="0.45">Visualizations</text>
<path d="M1118 58.5L1124.5 64.3L1118 70" fill="none" stroke="#252423" stroke-width="1.1"/>
<g transform="translate(963 92)" fill="none" stroke-width="1"><path d="M0.5 0.5V15.5H16" stroke="#323130"/><rect x="1" y="2.5" width="4" height="3.5" fill="#fff" stroke="#323130"/><rect x="4.5" y="2.5" width="5" height="3.5" fill="#69aeea" stroke="#1a73c9"/><rect x="1" y="9" width="6" height="3.5" fill="#fff" stroke="#323130"/><rect x="7" y="9" width="6" height="3.5" fill="#c8c6c4" stroke="#a19f9d"/></g>
<g transform="translate(991 92)" fill="none" stroke-width="1"><path d="M0.5 0.5V15.5H16" stroke="#323130"/><rect x="2.5" y="5" width="3.5" height="5" fill="#69aeea" stroke="#1a73c9"/><rect x="2.5" y="10" width="3.5" height="5" fill="#fff" stroke="#323130"/><rect x="9" y="1.5" width="3.5" height="7" fill="#c8c6c4" stroke="#a19f9d"/><rect x="9" y="8.5" width="3.5" height="6.5" fill="#fff" stroke="#323130"/></g>
<g transform="translate(1019 92)" fill="none" stroke-width="1"><path d="M0.5 0.5V15.5H16" stroke="#323130"/><rect x="1" y="1" width="14" height="3" fill="#69aeea" stroke="#1a73c9"/><rect x="1" y="5" width="10" height="3" fill="#fff" stroke="#323130"/><rect x="1" y="9.5" width="5" height="2" fill="#c8c6c4" stroke="#a19f9d"/><rect x="1" y="12" width="12" height="2.5" fill="#fff" stroke="#323130"/></g>
<g transform="translate(1047 92)" fill="none" stroke-width="1"><path d="M0.5 0.5V15.5H16" stroke="#323130"/><rect x="1.5" y="0.5" width="3" height="15" fill="#69aeea" stroke="#1a73c9"/><rect x="5.5" y="6" width="3" height="9" fill="#fff" stroke="#323130"/><rect x="8.5" y="9" width="3" height="6" fill="#c8c6c4" stroke="#a19f9d"/><rect x="12" y="4" width="3" height="11" fill="#fff" stroke="#323130"/></g>
<g transform="translate(1075 92)" fill="none" stroke-width="1"><path d="M0.5 0.5V15.5H16" stroke="#323130"/><rect x="1" y="2.5" width="5" height="3.5" fill="#fff" stroke="#323130"/><rect x="6" y="2.5" width="8" height="3.5" fill="#69aeea" stroke="#1a73c9"/><rect x="1" y="9" width="8" height="3.5" fill="#fff" stroke="#323130"/><rect x="9" y="9" width="5" height="3.5" fill="#c8c6c4" stroke="#a19f9d"/></g>
<g transform="translate(1103 92)" fill="none" stroke-width="1"><path d="M0.5 0.5V15.5H16" stroke="#323130"/><rect x="2.5" y="1" width="3.5" height="9" fill="#69aeea" stroke="#1a73c9"/><rect x="2.5" y="10" width="3.5" height="5" fill="#fff" stroke="#323130"/><rect x="9.5" y="1" width="3.5" height="6" fill="#c8c6c4" stroke="#a19f9d"/><rect x="9.5" y="7" width="3.5" height="8" fill="#fff" stroke="#323130"/></g>
<g transform="translate(963 116)" fill="none" stroke-width="1"><path d="M0.5 0.5V15.5H16" stroke="#323130"/><path d="M1 9l5-5l4 4l5-5" stroke="#323130"/><path d="M1 13l6-6l3 3l5-4" stroke="#1a73c9" stroke-width="1.3"/></g>
<g transform="translate(991 116)" fill="none" stroke-width="1"><path d="M0.5 15.5L5 5l4 6l3-8l4 8v4.5z" fill="#c8c6c4" stroke="#a19f9d"/><path d="M0.5 15.5L0.5 9l4-4l4 6z" fill="#fff" stroke="#323130"/><path d="M0.5 15.5l5-7l4 4l3-3l4 6z" fill="#69aeea" stroke="#1a73c9"/></g>
<g transform="translate(1019 116)" fill="none" stroke-width="1"><path d="M0.5 0.5V15.5H16" stroke="#323130"/><path d="M1 1.5l5.5 6l5-5l4 2v6l-4-2l-5 5l-5.5-6z" fill="#69aeea" stroke="#1a73c9"/><path d="M1 7.5l5.5 6l5-5l4 2v4.5H1z" fill="#fff" stroke="none"/></g>
<g transform="translate(1047 116)" fill="none" stroke-width="1"><path d="M0.5 0.5V15.5H16" stroke="#323130"/><rect x="2" y="3" width="3" height="12" fill="#69aeea" stroke="#1a73c9"/><rect x="9" y="3" width="3" height="12" fill="#c8c6c4" stroke="#a19f9d"/><path d="M1 13l4-5l4 4l6-6" stroke="#323130"/></g>
<g transform="translate(1075 116)" fill="none" stroke-width="1"><path d="M0.5 0.5V15.5H16" stroke="#323130"/><rect x="2" y="8" width="3" height="7" fill="#69aeea" stroke="#1a73c9"/><rect x="5" y="2" width="3" height="13" fill="#fff" stroke="#323130"/><rect x="9.5" y="5" width="3" height="10" fill="#c8c6c4" stroke="#a19f9d"/><path d="M1 13l4-5l4 4l6-6" stroke="#323130"/></g>
<g transform="translate(1103 116)" fill="none" stroke-width="1"><path d="M0.5 0.5V15.5H16" stroke="#323130"/><path d="M1 4c4 3 5 3 7 1s4-2 7 0v4c-3-2-5-2-7 0s-3 2-7-1z" fill="#c8c6c4" stroke="#a19f9d"/><path d="M1 10c4 3 5 3 7 0s4-2 7 0" stroke="#e8831c" stroke-width="2"/><path d="M1 8c4 4 5 4 7 1s4-2 7 0" stroke="#1a73c9" stroke-width="2"/></g>
<g transform="translate(963 140)" fill="none" stroke-width="1"><path d="M0.5 0.5V15.5H16" stroke="#323130"/><rect x="2" y="3" width="3" height="12" fill="#c8c6c4" stroke="#a19f9d"/><rect x="5" y="6" width="3" height="9" fill="#fff" stroke="#323130"/><rect x="9" y="0.5" width="3" height="10" fill="#69aeea" stroke="#1a73c9"/><rect x="12" y="0.5" width="3" height="15" fill="#fff" stroke="#323130"/></g>
<g transform="translate(991 140)" fill="none" stroke-width="1"><path d="M0.5 0.5h15v3.5h-15z" fill="#69aeea" stroke="#1a73c9"/><path d="M2.5 4h11v5h-11z" fill="#69aeea" stroke="#1a73c9"/><path d="M5 9h6v6h-6z" fill="#69aeea" stroke="#1a73c9"/></g>
<g transform="translate(1019 140)" fill="none" stroke-width="1"><path d="M0.5 0.5V15.5H16" stroke="#323130"/><circle cx="4" cy="12" r="1.5" fill="#323130"/><circle cx="13" cy="2" r="1.5" fill="#323130"/><circle cx="4" cy="5" r="1.5" fill="#69aeea"/><circle cx="9" cy="7" r="1.3" fill="#69aeea"/><circle cx="13" cy="11" r="1.5" fill="#69aeea"/></g>
<g transform="translate(1047 140)" fill="none" stroke-width="1"><circle cx="8" cy="8" r="7.5" fill="#fff" stroke="#323130"/><path d="M8 0.5A7.5 7.5 0 0 1 13.3 13.3L8 8z" fill="#69aeea" stroke="#1a73c9"/></g>
<g transform="translate(1075 140)" fill="none" stroke-width="1"><circle cx="8" cy="8" r="6" fill="none" stroke="#69aeea" stroke-width="3"/><path d="M8 2A6 6 0 0 1 14 8" stroke="#fff" stroke-width="1.2"/><circle cx="8" cy="8" r="7.5" stroke="#1a73c9"/><circle cx="8" cy="8" r="3.5" stroke="#1a73c9"/></g>
<g transform="translate(1103 140)" fill="none" stroke-width="1"><rect x="0.5" y="0.5" width="15" height="15" fill="#fff" stroke="#323130"/><rect x="0.5" y="0.5" width="7" height="15" fill="#69aeea" stroke="#1a73c9"/><path d="M0.5 8h7M7.5 5h8M11 5v10M11 10h4.5" stroke="#323130"/></g>
<g transform="translate(963 164)" fill="none" stroke-width="1"><circle cx="8" cy="7" r="5.5" fill="#fff" stroke="#323130" stroke-width="1.5"/><circle cx="6.5" cy="6" r="1.8" fill="#2ea043"/><circle cx="10" cy="9" r="1.3" fill="#2ea043"/><path d="M3 15h10M8 12.5v2.5" stroke="#323130"/></g>
<g transform="translate(991 164)" fill="none" stroke-width="1"><path d="M0.5 1l5 1l4-1l6 1v7l-2 4l-4 1l-3 2l-6-2z" fill="#c8c6c4" stroke="#a19f9d"/><path d="M0.5 1l5 1l1 5l-6 1z" fill="#69aeea" stroke="#1a73c9"/><path d="M9 9l6-1l-2 5l-6 2z" fill="#69aeea" stroke="#1a73c9"/></g>
<g transform="translate(1019 164)" fill="none" stroke-width="1"><path d="M1 12a7 7 0 0 1 14 0" fill="#fff" stroke="#323130" stroke-width="1"/><path d="M8 5a7 7 0 0 1 7 7" stroke="#69aeea" stroke-width="2.5"/><path d="M8 12l3-4" stroke="#323130" stroke-width="1.5"/></g>
<g transform="translate(1047 164)" fill="none" stroke-width="1"><rect x="0.5" y="1.5" width="15" height="11" fill="#fff" stroke="#323130" stroke-width="1.2"/><text x="2" y="10" font-size="7" fill="#69aeea" stroke="none" font-family="Liberation Sans">123</text><rect x="1" y="10.5" width="14" height="1.5" fill="#c8c6c4" stroke="none"/></g>
<g transform="translate(1075 164)" fill="none" stroke-width="1"><rect x="0.5" y="0.5" width="15" height="14" fill="#fff" stroke="#323130" stroke-width="1.3"/><rect x="2.5" y="2.5" width="1.5" height="10" fill="#c8c6c4" stroke="none"/><path d="M5 4.5h8M5 8h3M5 10.5h8" stroke="#1a73c9" stroke-width="1.5"/></g>
<g transform="translate(1103 164)" fill="none" stroke-width="1"><rect x="0.5" y="1.5" width="15" height="12" fill="#fff" stroke="#323130" stroke-width="1.3"/><path d="M3 9l2-4l2 4z" fill="#2ea043"/><path d="M9 5h4l-2 4z" fill="#e81123"/><path d="M2 11h12" stroke="#c8c6c4"/></g>
<g transform="translate(963 188)" fill="none" stroke-width="1"><rect x="0.5" y="0.5" width="15" height="15" fill="#fff" stroke="#323130"/><path d="M0.5 3h15" stroke="#a19f9d"/><rect x="3" y="6" width="2.5" height="2.5" stroke="#a19f9d"/><rect x="3" y="10" width="2.5" height="2.5" stroke="#a19f9d"/><path d="M8 9h8l-3 3v4h-2v-4z" fill="#fff" stroke="#323130"/></g>
<g transform="translate(991 188)" fill="none" stroke-width="1"><rect x="0.5" y="0.5" width="15" height="15" fill="#fff" stroke="#323130"/><path d="M0.5 3.5h15M0.5 7.5h15M0.5 11.5h15M5.5 3.5v12M10.5 3.5v12" stroke="#c8c6c4"/><path d="M0.5 3h15" stroke="#323130"/></g>
<g transform="translate(1019 188)" fill="none" stroke-width="1"><rect x="0.5" y="0.5" width="15" height="15" fill="#fff" stroke="#323130"/><path d="M0.5 3.5h15M0.5 7.5h15M5.5 3.5v8M10.5 3.5v8" stroke="#c8c6c4"/><rect x="10.5" y="3.5" width="5" height="12" fill="#69aeea"/><rect x="0.5" y="11.5" width="15" height="4" fill="#69aeea"/><path d="M10.5 7.5h5M0.5 11.5h15M5.5 11.5v4M10.5 11.5v4" stroke="#fff"/><rect x="0.5" y="0.5" width="15" height="15" fill="none" stroke="#323130"/><path d="M0.5 2.5h15" stroke="#a19f9d"/></g>
<g transform="translate(1047 188)" fill="none" stroke-width="1"><path d="M0.5 0.5V15.5H16" stroke="#323130"/><path d="M1 3h10M1 7h8M1 11h4" stroke="#1a73c9"/><circle cx="13" cy="3" r="2" fill="#69aeea" stroke="#1a73c9"/><circle cx="10.5" cy="7" r="1.5" stroke="#a19f9d"/><circle cx="6.5" cy="11" r="1.5" stroke="#a19f9d"/></g>
<g transform="translate(1075 188)" fill="none" stroke-width="1"><rect x="0.5" y="6" width="5" height="4" fill="#69aeea" stroke="#1a73c9"/><rect x="10.5" y="0.5" width="5" height="4" fill="#69aeea" stroke="#1a73c9"/><rect x="10.5" y="6" width="5" height="4" fill="#69aeea" stroke="#1a73c9"/><rect x="10.5" y="11.5" width="5" height="4" fill="#69aeea" stroke="#1a73c9"/><path d="M5.5 8h5M8.5 2.5v11M8.5 2.5h2M8.5 13.5h2" stroke="#323130"/></g>
<g transform="translate(1103 188)" fill="none" stroke-width="1"><path d="M0.5 0.5h15v11h-9l-3.5 3.5v-3.5h-2.5z" fill="#fff" stroke="#1a73c9" stroke-width="1.2"/></g>
<g transform="translate(963 212)" fill="none" stroke-width="1"><path d="M1.5 0.5h9l4 4v11h-13z" fill="#fff" stroke="#323130"/><circle cx="3" cy="6" r="1.5" fill="#1a73c9"/><path d="M5 7h7M5 10h6" stroke="#69aeea"/></g>
<g transform="translate(991 212)" fill="none" stroke-width="1"><path d="M1.5 0.5h9l4 4v11h-13z" fill="#fff" stroke="#323130"/><path d="M5 13v-3M8 13v-5M11 13v-7" stroke="#323130" stroke-width="1.5"/></g>
<g transform="translate(1019 212)" fill="none" stroke-width="1"><rect x="0.5" y="1.5" width="15" height="14" fill="#fff" stroke="#1a73c9" stroke-width="1.3"/><path d="M5 3l9 0l-2 5l-4 3l-2 4h-5z" fill="#69aeea"/><path d="M0 0h5v5l-2.5 2l-2.5-2z" fill="#d9661f"/><circle cx="14" cy="10" r="1.5" fill="#d9661f"/><circle cx="12" cy="14" r="2" fill="#d9661f"/></g>
<g transform="translate(1047 212)" fill="none" stroke-width="1"><path d="M8 1l7 7l-7 7l-7-7z" stroke="#742774" stroke-width="1.2"/><path d="M4.5 4.5l7 7M11.5 4.5l-7 7" stroke="#742774" stroke-width="1"/></g>
<g transform="translate(1075 212)" fill="none" stroke-width="1"><path d="M1 1.5h8l6 6.5l-6 6.5h-8l6-6.5z" fill="#fff" stroke="#1a73c9" stroke-width="1.2"/><path d="M6 8.5l3-3M8 11l3-3" stroke="#1a73c9"/></g>
<circle cx="1105.5" cy="219" r="0.9" fill="#252423"/>
<circle cx="1111" cy="219" r="0.9" fill="#252423"/>
<circle cx="1116.5" cy="219" r="0.9" fill="#252423"/>
<rect x="958" y="232" width="179" height="1" fill="#e1dfdd"/>
<g fill="none" stroke="#252423" stroke-width="1"><path d="M979 240.5h19"/><rect x="979.5" y="243.5" width="19" height="7" stroke-dasharray="1.5 1"/><rect x="979.5" y="252.5" width="19" height="7.5" stroke-dasharray="1.5 1"/></g>
<g fill="none" stroke="#252423" stroke-width="1.1"><rect x="1020.5" y="241.5" width="15" height="4.5" rx="1.5"/><path d="M1035.5 244h2v5.5h-8.5v3"/><rect x="1027" y="252.5" width="3.5" height="8" rx="1"/></g>
<rect x="969" y="265" width="40" height="4" rx="2" fill="#f2c811"/>
<text x="969.3" y="286.8" font-size="12" fill="#252423" font-weight="normal" textLength="33.6" lengthAdjust="spacingAndGlyphs">Values</text>
<rect x="961.5" y="296.5" width="169" height="27" fill="#fff" stroke="#b3b0ad" stroke-dasharray="3 2"/>
<text x="972.3" y="314.7" font-size="12" fill="#252423" font-weight="normal" textLength="106.1" lengthAdjust="spacingAndGlyphs">Add data fields here</text>
<text x="971.2" y="353.9" font-size="15" fill="#252423" font-weight="normal" textLength="92.2" lengthAdjust="spacingAndGlyphs" stroke="#252423" stroke-width="0.45">Drill through</text>
<text x="966.1" y="385.0" font-size="12" fill="#252423" font-weight="normal" textLength="66.0" lengthAdjust="spacingAndGlyphs">Cross-report</text>
<text x="975.5" y="413.6" font-size="12" fill="#252423" font-weight="normal" textLength="15.7" lengthAdjust="spacingAndGlyphs">Off</text>
<path d="M1007.5 410h17" stroke="#605e5c" stroke-width="2"/><circle cx="1002" cy="410" r="5" fill="#fff" stroke="#605e5c" stroke-width="2"/>
<text x="966.6" y="449.1" font-size="12" fill="#252423" font-weight="normal" textLength="73.2" lengthAdjust="spacingAndGlyphs">Keep all filters</text>
<text x="975.3" y="478.2" font-size="12" fill="#252423" font-weight="normal" textLength="15.0" lengthAdjust="spacingAndGlyphs">On</text>
<path d="M995.5 474h18" stroke="#605e5c" stroke-width="2"/><circle cx="1018.8" cy="474" r="6" fill="#605e5c"/>
<rect x="961.5" y="495.5" width="169" height="25" fill="#fff" stroke="#b3b0ad" stroke-dasharray="3 2"/>
<text x="970.4" y="512.9" font-size="12" fill="#252423" font-weight="normal" textLength="149.7" lengthAdjust="spacingAndGlyphs">Add drill-through fields here</text>
<text x="1150.7" y="69.5" font-size="15" fill="#252423" font-weight="normal" textLength="40.4" lengthAdjust="spacingAndGlyphs" stroke="#252423" stroke-width="0.45">Fields</text>
<path d="M1299 58.5L1305.5 64.3L1299 70" fill="none" stroke="#252423" stroke-width="1.1"/>
<rect x="1142.5" y="88.5" width="171" height="26" rx="2" fill="#fff" stroke="#605e5c"/>
<circle cx="1159.5" cy="99" r="4.5" fill="none" stroke="#252423"/><path d="M1156.3 102.2L1150.5 108" stroke="#252423" stroke-width="1.1"/>
<text x="1171.5" y="106.8" font-size="12.5" fill="#252423" font-weight="normal" textLength="40.2" lengthAdjust="spacingAndGlyphs">Search</text>
<rect x="1138" y="121" width="180" height="1" fill="#e1dfdd"/>
<path d="M1148.0 137.5L1154.0 143.0L1148.0 148.5" fill="none" stroke="#605e5c" stroke-width="1"/>
<g fill="none" stroke="#252423" stroke-width="1"><rect x="1162.5" y="136.5" width="10.5" height="14"/><path d="M1160.5 150.5v-14h2"/><rect x="1164.5" y="138.5" width="6.5" height="3"/></g><g fill="#252423"><rect x="1164.5" y="143.5" width="1.2" height="1.2"/><rect x="1167.2" y="143.5" width="1.2" height="1.2"/><rect x="1170" y="143.5" width="1.2" height="1.2"/><rect x="1164.5" y="146.5" width="1.2" height="1.2"/><rect x="1167.2" y="146.5" width="1.2" height="1.2"/><rect x="1170" y="146.5" width="1.2" height="1.2"/></g>
<text x="1179.6" y="147.5" font-size="12" fill="#252423" font-weight="normal" textLength="37.3" lengthAdjust="spacingAndGlyphs">Targets</text>
<path d="M1145.5 164.5L1151 170L1156.5 164.5" fill="none" stroke="#605e5c" stroke-width="1"/>
<g fill="none" stroke="#252423" stroke-width="1"><rect x="1160.5" y="161.5" width="12" height="11"/><path d="M1160 166.5h12M1160 169.5h12M1164.5 164v8M1168.5 164v8"/></g><rect x="1160" y="161" width="13" height="2.5" fill="#252423"/>
<text x="1179.6" y="171.4" font-size="12" fill="#252423" font-weight="normal" textLength="23.7" lengthAdjust="spacingAndGlyphs">Date</text>
<rect x="1176.5" y="185.5" width="11" height="11" rx="1" fill="none" stroke="#605e5c"/>
<g fill="none" stroke="#252423"><rect x="1194.5" y="185.5" width="15" height="11"/><circle cx="1199" cy="189.5" r="1.5"/><path d="M1196.5 194c0-2 5-2 5 0M1203.5 189.5h4M1203.5 192h4"/></g>
<text x="1215.1" y="195.7" font-size="12" fill="#252423" font-weight="normal" textLength="23.2" lengthAdjust="spacingAndGlyphs">Date</text>
<path d="M1163.0 210.0L1169.0 215.5L1163.0 221.0" fill="none" stroke="#605e5c" stroke-width="1"/>
<rect x="1176.5" y="209.9" width="11" height="11" rx="1" fill="none" stroke="#605e5c"/>
<g fill="none" stroke="#252423" stroke-width="1"><rect x="1197.5" y="207.5" width="3" height="3"/><rect x="1202.5" y="213.5" width="3.5" height="3"/><rect x="1202.5" y="218.5" width="3.5" height="3"/><path d="M1199 210.5v9.5h3.5M1199 215h3.5"/></g>
<text x="1214.5" y="220.1" font-size="12" fill="#252423" font-weight="normal" textLength="27.6" lengthAdjust="spacingAndGlyphs">Fiscal</text>
<rect x="1176.5" y="233.8" width="11" height="11" rx="1" fill="none" stroke="#605e5c"/>
<text x="1214.5" y="243.8" font-size="12" fill="#252423" font-weight="normal" textLength="34.5" lengthAdjust="spacingAndGlyphs">Month</text>
<rect x="1176.5" y="257.8" width="11" height="11" rx="1" fill="none" stroke="#605e5c"/>
<text x="1214.5" y="267.8" font-size="12" fill="#252423" font-weight="normal" textLength="40.4" lengthAdjust="spacingAndGlyphs">Quarter</text>
<rect x="1176.5" y="281.8" width="11" height="11" rx="1" fill="none" stroke="#605e5c"/>
<text x="1214.5" y="291.8" font-size="12" fill="#252423" font-weight="normal" textLength="21.7" lengthAdjust="spacingAndGlyphs">Year</text>
<path d="M1148.0 306.1L1154.0 311.6L1148.0 317.1" fill="none" stroke="#605e5c" stroke-width="1"/>
<g fill="none" stroke="#252423" stroke-width="1"><rect x="1160.5" y="306.5" width="12" height="11"/><path d="M1160 311.5h12M1160 314.5h12M1164.5 309v8M1168.5 309v8"/></g><rect x="1160" y="306" width="13" height="2.5" fill="#252423"/>
<text x="1179.5" y="315.8" font-size="12" fill="#252423" font-weight="normal" textLength="40.9" lengthAdjust="spacingAndGlyphs">Product</text>
<path d="M1148.0 330.1L1154.0 335.6L1148.0 341.1" fill="none" stroke="#605e5c" stroke-width="1"/>
<g fill="none" stroke="#252423" stroke-width="1"><rect x="1160.5" y="330.5" width="12" height="11"/><path d="M1160 335.5h12M1160 338.5h12M1164.5 333v8M1168.5 333v8"/></g><rect x="1160" y="330" width="13" height="2.5" fill="#252423"/>
<text x="1179.5" y="339.8" font-size="12" fill="#252423" font-weight="normal" textLength="36.0" lengthAdjust="spacingAndGlyphs">Region</text>
<path d="M1148.0 354.1L1154.0 359.6L1148.0 365.1" fill="none" stroke="#605e5c" stroke-width="1"/>
<g fill="none" stroke="#252423" stroke-width="1"><rect x="1160.5" y="354.5" width="12" height="11"/><path d="M1160 359.5h12M1160 362.5h12M1164.5 357v8M1168.5 357v8"/></g><rect x="1160" y="354" width="13" height="2.5" fill="#252423"/>
<text x="1179.5" y="363.8" font-size="12" fill="#252423" font-weight="normal" textLength="40.0" lengthAdjust="spacingAndGlyphs">Reseller</text>
<path d="M1148.0 378.1L1154.0 383.6L1148.0 389.1" fill="none" stroke="#605e5c" stroke-width="1"/>
<g fill="none" stroke="#252423" stroke-width="1"><rect x="1160.5" y="378.5" width="12" height="11"/><path d="M1160 383.5h12M1160 386.5h12M1164.5 381v8M1168.5 381v8"/></g><rect x="1160" y="378" width="13" height="2.5" fill="#252423"/>
<text x="1179.5" y="387.8" font-size="12" fill="#252423" font-weight="normal" textLength="26.5" lengthAdjust="spacingAndGlyphs">Sales</text>
<path d="M1148.0 402.1L1154.0 407.6L1148.0 413.1" fill="none" stroke="#605e5c" stroke-width="1"/>
<g fill="none" stroke="#252423" stroke-width="1"><rect x="1160.5" y="402.5" width="12" height="11"/><path d="M1160 407.5h12M1160 410.5h12M1164.5 405v8M1168.5 405v8"/></g><rect x="1160" y="402" width="13" height="2.5" fill="#252423"/>
<text x="1179.5" y="411.8" font-size="12" fill="#252423" font-weight="normal" textLength="62.0" lengthAdjust="spacingAndGlyphs">Salesperson</text>
<path d="M1148.0 426.1L1154.0 431.6L1148.0 437.1" fill="none" stroke="#605e5c" stroke-width="1"/>
<g fill="none" stroke="#252423" stroke-width="1"><rect x="1160.5" y="426.5" width="12" height="11"/><path d="M1160 431.5h12M1160 434.5h12M1164.5 429v8M1168.5 429v8"/></g><rect x="1160" y="426" width="13" height="2.5" fill="#252423"/>
<text x="1179.5" y="435.8" font-size="12" fill="#252423" font-weight="normal" textLength="132.6" lengthAdjust="spacingAndGlyphs">Salesperson (Performan...</text>
<path d="M13.5 566.5v7l-4.5-3.5z" fill="#c8c6c4"/><path d="M30.5 566.5v7l4.5-3.5z" fill="#c8c6c4"/>
<text x="63.1" y="574.1" font-size="12.5" fill="#252423" font-weight="normal" textLength="50.9" lengthAdjust="spacingAndGlyphs">Overview</text>
<text x="155.5" y="574.1" font-size="12.5" fill="#252423" font-weight="normal" textLength="28.4" lengthAdjust="spacingAndGlyphs">Profit</text>
<text x="225.5" y="574.1" font-size="12.5" fill="#252423" font-weight="normal" textLength="85.7" lengthAdjust="spacingAndGlyphs">My Performance</text>
<g fill="none" stroke="#605e5c" stroke-width="0.9"><path d="M344 573a7 5 0 0 1 12 0"/><circle cx="350" cy="573" r="2"/><path d="M344.5 567.5l11 10"/></g>
<text x="360.7" y="574.1" font-size="12.5" fill="#252423" font-weight="normal" textLength="79.6" lengthAdjust="spacingAndGlyphs">Product Details</text>
<path d="M468 570.4h11M473.5 564.9v11" stroke="#6b6b6e" stroke-width="2.6"/>
<defs><filter id="sh" x="-10%" y="-10%" width="120%" height="120%"><feGaussianBlur stdDeviation="1.5"/></filter></defs>
<rect x="759" y="41" width="199" height="491" fill="none" stroke="#000" stroke-opacity="0.35" stroke-width="2.5" filter="url(#sh)"/>
<rect x="757" y="39" width="199" height="491" fill="none" stroke="#ff0000" stroke-width="2"/>
<path d="M1089 463L963 359" stroke="#888" stroke-opacity="0.5" stroke-width="2" filter="url(#sh)"/>
<path d="M1088 462L966 361" stroke="#ff0000" stroke-width="2"/><path d="M960 356.5L973 360.5L967.5 367z" fill="#ff0000"/>
</svg></body></html>
